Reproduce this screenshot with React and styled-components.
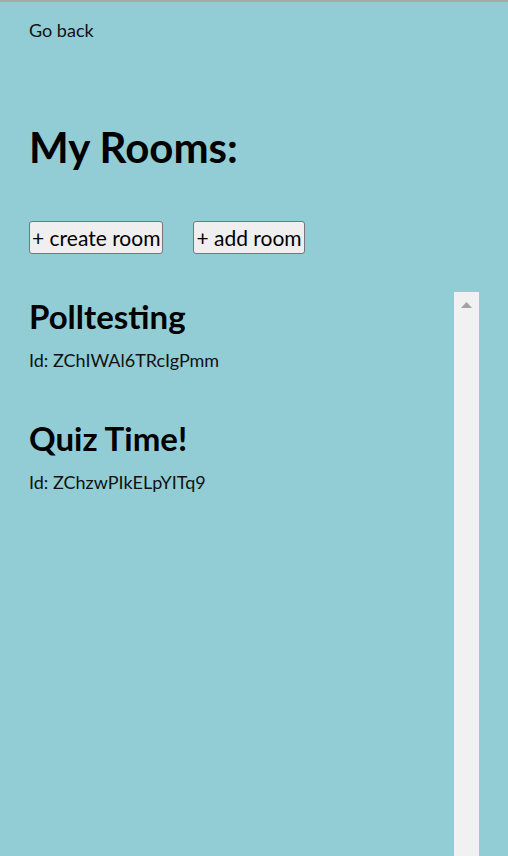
import React from 'react';
import styled, { createGlobalStyle } from 'styled-components';

const GlobalStyle = createGlobalStyle`
  html, body {
    margin: 0;
    height: 100%;
    overflow: hidden;
    background: #92cdd6;
  }
  body {
    border-top: 2px solid #a7a9ab;
    box-sizing: border-box;
    font-family: Lato, "Liberation Sans", sans-serif;
    color: #000;
  }
`;

const Page = styled.div`
  padding: 0 29px;
`;

const BackLink = styled.a`
  display: inline-block;
  margin-top: 17px;
  font-size: 18px;
  color: #111;
  cursor: pointer;
`;

const Title = styled.h1`
  margin: 81px 0 49px;
  font-size: 42px;
  font-weight: 700;
  line-height: 1.2;
`;

const ButtonRow = styled.div`
  display: flex;
  gap: 30px;
`;

const Button = styled.button`
  height: 33px;
  padding: 0 2px;
  font-family: inherit;
  font-size: 21px;
  color: #000;
  background: #efefef;
  border: 1px solid #767676;
  border-radius: 3px;
`;

const ListArea = styled.div`
  margin-top: 38px;
  width: 450px;
  height: 564px;
  display: flex;
`;

const RoomList = styled.div`
  flex: 1;
  overflow: hidden;
`;

const ScrollTrack = styled.div`
  width: 25px;
  flex-shrink: 0;
  background: #f1f1f1;
  display: flex;
  flex-direction: column;
  align-items: center;
`;

const ArrowButton = styled.div`
  width: 25px;
  height: 25px;
  display: flex;
  align-items: center;
  justify-content: center;
`;

const Room = styled.div`
  padding-bottom: 43px;
`;

const RoomName = styled.h2`
  margin: 5px 0 12px;
  font-size: 33px;
  font-weight: 700;
  line-height: 1.2;
`;

const RoomId = styled.p`
  margin: 0;
  font-size: 18px;
  color: #111;
`;

const rooms = [
  { name: 'Polltesting', id: 'ZChIWAl6TRcIgPmm' },
  { name: 'Quiz Time!', id: 'ZChzwPIkELpYITq9' },
];

export default function App() {
  return (
    <>
      <GlobalStyle />
      <Page>
        <BackLink>Go back</BackLink>
        <Title>My Rooms:</Title>
        <ButtonRow>
          <Button>+ create room</Button>
          <Button>+ add room</Button>
        </ButtonRow>
        <ListArea>
          <RoomList>
            {rooms.map((room) => (
              <Room key={room.id}>
                <RoomName>{room.name}</RoomName>
                <RoomId>Id: {room.id}</RoomId>
              </Room>
            ))}
          </RoomList>
          <ScrollTrack>
            <ArrowButton>
              <svg width="11" height="6" viewBox="0 0 11 6">
                <path d="M5.5 0 L11 6 L0 6 Z" fill="#a3a3a3" />
              </svg>
            </ArrowButton>
          </ScrollTrack>
        </ListArea>
      </Page>
    </>
  );
}
